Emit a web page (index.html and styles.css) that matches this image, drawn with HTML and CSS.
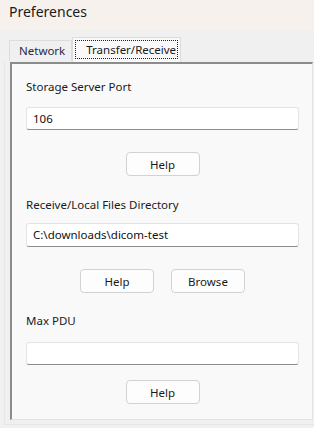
FILE: index.html
```html
<!DOCTYPE html>
<html>
<head>
<meta charset="utf-8">
<link rel="stylesheet" href="styles.css">
</head>
<body>
<div class="window">
  <div class="titlebar">Preferences</div>
  <div class="tabs">
    <div class="tab">Network</div>
    <div class="tab active"><span class="focus">Transfer/Receive</span></div>
  </div>
  <div class="frame">
    <div class="panel">
      <div class="label l1">Storage Server Port</div>
      <div class="input i1">106</div>
      <div class="btnrow r1"><button class="btn">Help</button></div>
      <div class="label l2">Receive/Local Files Directory</div>
      <div class="input i2">C:\downloads\dicom-test</div>
      <div class="btnrow r2"><button class="btn">Help</button><button class="btn">Browse</button></div>
      <div class="label l3">Max PDU</div>
      <div class="input i3"></div>
      <div class="btnrow r3"><button class="btn">Help</button></div>
    </div>
  </div>
</div>
</body>
</html>
```
FILE: styles.css
```css
* { box-sizing: border-box; }
html, body { margin: 0; padding: 0; }
body {
  width: 314px;
  height: 428px;
  overflow: hidden;
  background: #f0f0f0;
  font-family: "Noto Sans", "Open Sans", sans-serif;
  color: #1a1a1a;
}
.window { display: flex; flex-direction: column; height: 428px; }
.titlebar {
  height: 30px;
  background: #f6f1ec;
  font-size: 14px;
  line-height: 24px;
  padding-left: 9px;
  color: #1a1a1a;
}
.tabs {
  display: flex;
  align-items: flex-end;
  height: 32px;
  padding-left: 9px;
}
.tab {
  height: 21px;
  padding: 0 6px 0 9px;
  font-size: 11.5px;
  line-height: 20px;
  border: 1px solid #dcdcdc;
  border-bottom: none;
  background: #f0f0f0;
  color: #1e2b48;
  margin-bottom: 1px;
}
.tab.active {
  height: 25px;
  background: #f9f9f9;
  padding: 2px 2px 0 2px;
  margin-bottom: 0;
  position: relative;
  z-index: 1;
}
.focus {
  display: block;
  border: 1px dotted #222;
  padding: 0 1px 0 10px;
  line-height: 17px;
  height: 19px;
  color: #1a1a1a;
}
.frame {
  margin-left: 4px;
  border-left: 1px solid #e6e6e6;
  border-bottom: 1px solid #e6e6e6;
  padding: 0 0 3px 5px;
  height: 363px;
}
.panel {
  height: 358px;
  width: 303px;
  background: #f9f9f9;
  border-top: 2px solid #8c8c8c;
  border-left: 2px solid #8c8c8c;
  border-right: 1px solid #e3e3e3;
  border-bottom: 1px solid #e3e3e3;
  display: flex;
  flex-direction: column;
  padding-left: 14px;
}
.label {
  font-size: 11.5px;
  line-height: 14px;
  height: 14px;
  color: #1a1a1a;
}
.input {
  width: 273px;
  height: 23px;
  background: #fff;
  border: 1px solid #e4e4e4;
  border-bottom: 1px solid #8d8d8d;
  border-radius: 3px;
  font-size: 11.5px;
  line-height: 21px;
  padding-left: 6px;
  color: #111;
}
.btnrow {
  width: 273px;
  display: flex;
  justify-content: center;
  gap: 17px;
}
.btn {
  width: 74px;
  height: 24px;
  background: #fdfdfd;
  border: 1px solid #d2d2d2;
  border-radius: 4px;
  font-family: "Noto Sans", "Open Sans", sans-serif;
  font-size: 11.5px;
  color: #1a1a1a;
  padding: 0;
}
.l1 { margin-top: 16px; }
.i1 { margin-top: 13px; }
.r1 { margin-top: 22px; }
.l2 { margin-top: 22px; }
.i2 { margin-top: 11px; height: 24px; }
.r2 { margin-top: 22px; }
.l3 { margin-top: 21px; }
.i3 { margin-top: 14px; }
.r3 { margin-top: 15px; }
```
